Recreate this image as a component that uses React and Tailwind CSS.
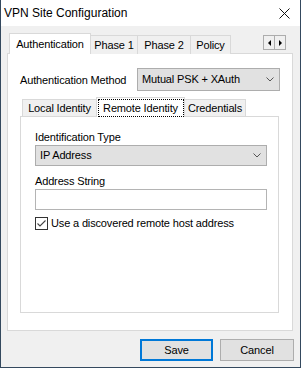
import { useState } from "react";

const Chevron = () => (
  <svg width="8" height="5" viewBox="0 0 8 5" className="shrink-0">
    <path d="M0.5 0.5 L4 4 L7.5 0.5" fill="none" stroke="#555" strokeWidth="1" />
  </svg>
);

function Tab({ label, selected, width }) {
  if (selected) {
    return (
      <div
        className="relative z-10 h-[21px] bg-white border-t border-x border-[#d9d9d9] flex items-center justify-center"
        style={{ width }}
      >
        {label}
      </div>
    );
  }
  return (
    <div
      className="-ml-px mt-[2px] h-[19px] bg-[#f0f0f0] border-t border-x border-[#d9d9d9] flex items-center justify-center"
      style={{ width }}
    >
      {label}
    </div>
  );
}

export default function App() {
  const [useDiscovered, setUseDiscovered] = useState(true);

  return (
    <div className="w-[301px] h-[368px] bg-[#f0f0f0] border-x border-b border-[#34495e] flex flex-col font-['Liberation_Sans',Arial,sans-serif] text-[11px] tracking-[-0.15px] text-black overflow-hidden whitespace-nowrap">
      {/* title bar */}
      <div className="h-[26px] bg-white flex items-center justify-between pl-[3px] pr-[10px] shrink-0">
        <span className="text-[12px] tracking-normal">VPN Site Configuration</span>
        <svg width="11" height="11" viewBox="0 0 11 11">
          <path d="M0.5 0.5 L10.5 10.5 M10.5 0.5 L0.5 10.5" stroke="#111" strokeWidth="1" />
        </svg>
      </div>

      <div className="ml-[6px] w-[286px] mt-[7px]">
        {/* main tabs */}
        <div className="flex items-start h-[20px] pl-[2px]">
          <Tab label="Authentication" selected width={82} />
          <Tab label="Phase 1" width={48} />
          <Tab label="Phase 2" width={54} />
          <Tab label="Policy" width={41} />
          <div className="ml-auto mr-[7px] mt-[2px] flex">
            <div className="w-[12px] h-[15px] border border-[#adadad] bg-[#f0f0f0] flex items-center justify-center">
              <svg width="3" height="6" viewBox="0 0 3 6"><path d="M3 0 L0 3 L3 6 Z" fill="#000" /></svg>
            </div>
            <div className="-ml-px w-[12px] h-[15px] border border-[#adadad] bg-[#f0f0f0] flex items-center justify-center">
              <svg width="3" height="6" viewBox="0 0 3 6"><path d="M0 0 L3 3 L0 6 Z" fill="#000" /></svg>
            </div>
          </div>
        </div>

        {/* main panel */}
        <div className="h-[278px] bg-white border border-[#d9d9d9] pt-[14px] px-[12px]">
          <div className="flex items-center">
            <span className="w-[117px] pt-[1px]">Authentication Method</span>
            <div className="w-[143px] h-[23px] bg-[#e1e1e1] border border-[#adadad] flex items-center justify-between pl-[4px] pr-[5px]">
              <span>Mutual PSK + XAuth</span>
              <Chevron />
            </div>
          </div>

          {/* inner tabs */}
          <div className="mt-[6px] flex items-start h-[19px] pl-[2px]">
            <div className="mt-[2px] h-[17px] w-[75px] bg-[#f0f0f0] border-t border-x border-[#d9d9d9] flex items-center justify-center">
              Local Identity
            </div>
            <div className="relative z-10 -ml-px h-[20px] w-[89px] bg-white border-t border-x border-[#d9d9d9] flex items-start justify-center pt-[1px]">
              <span className="border border-dotted border-black w-[86px] h-[18px] flex items-center justify-center">Remote Identity</span>
            </div>
            <div className="-ml-px mt-[2px] h-[17px] w-[62px] bg-[#f0f0f0] border-t border-x border-[#d9d9d9] flex items-center justify-center">
              Credentials
            </div>
          </div>

          <div className="w-[259px] h-[197px] border border-[#d9d9d9] pl-[14px] pt-[12px]">
            <div className="h-[16px] leading-[16px]">Identification Type</div>
            <div className="w-[232px] h-[21px] bg-[#e1e1e1] border border-[#adadad] flex items-center justify-between pl-[4px] pr-[5px]">
              <span>IP Address</span>
              <Chevron />
            </div>
            <div className="mt-[8px] h-[15px] leading-[15px]">Address String</div>
            <input
              className="block w-[232px] h-[21px] bg-white border border-[#b4b4b4] outline-none px-[3px] text-[11px]"
              defaultValue=""
            />
            <label className="mt-[7px] flex items-center gap-[3px] h-[13px] cursor-default">
              <span
                className="w-[13px] h-[13px] border border-[#333] bg-white flex items-center justify-center"
                onClick={() => setUseDiscovered(!useDiscovered)}
              >
                {useDiscovered && (
                  <svg width="11" height="11" viewBox="0 0 11 11">
                    <path d="M1.5 5.5 L4 8 L9.5 2.5" fill="none" stroke="#444" strokeWidth="1.1" />
                  </svg>
                )}
              </span>
              <span>Use a discovered remote host address</span>
            </label>
          </div>
        </div>
      </div>

      {/* buttons */}
      <div className="flex justify-end gap-[7px] mt-[8px] pr-[6px]">
        <button className="w-[73px] h-[22px] bg-[#e1e1e1] border-2 border-[#0078d7] text-[11px]">Save</button>
        <button className="w-[74px] h-[22px] bg-[#e1e1e1] border border-[#adadad] text-[11px]">Cancel</button>
      </div>
    </div>
  );
}
